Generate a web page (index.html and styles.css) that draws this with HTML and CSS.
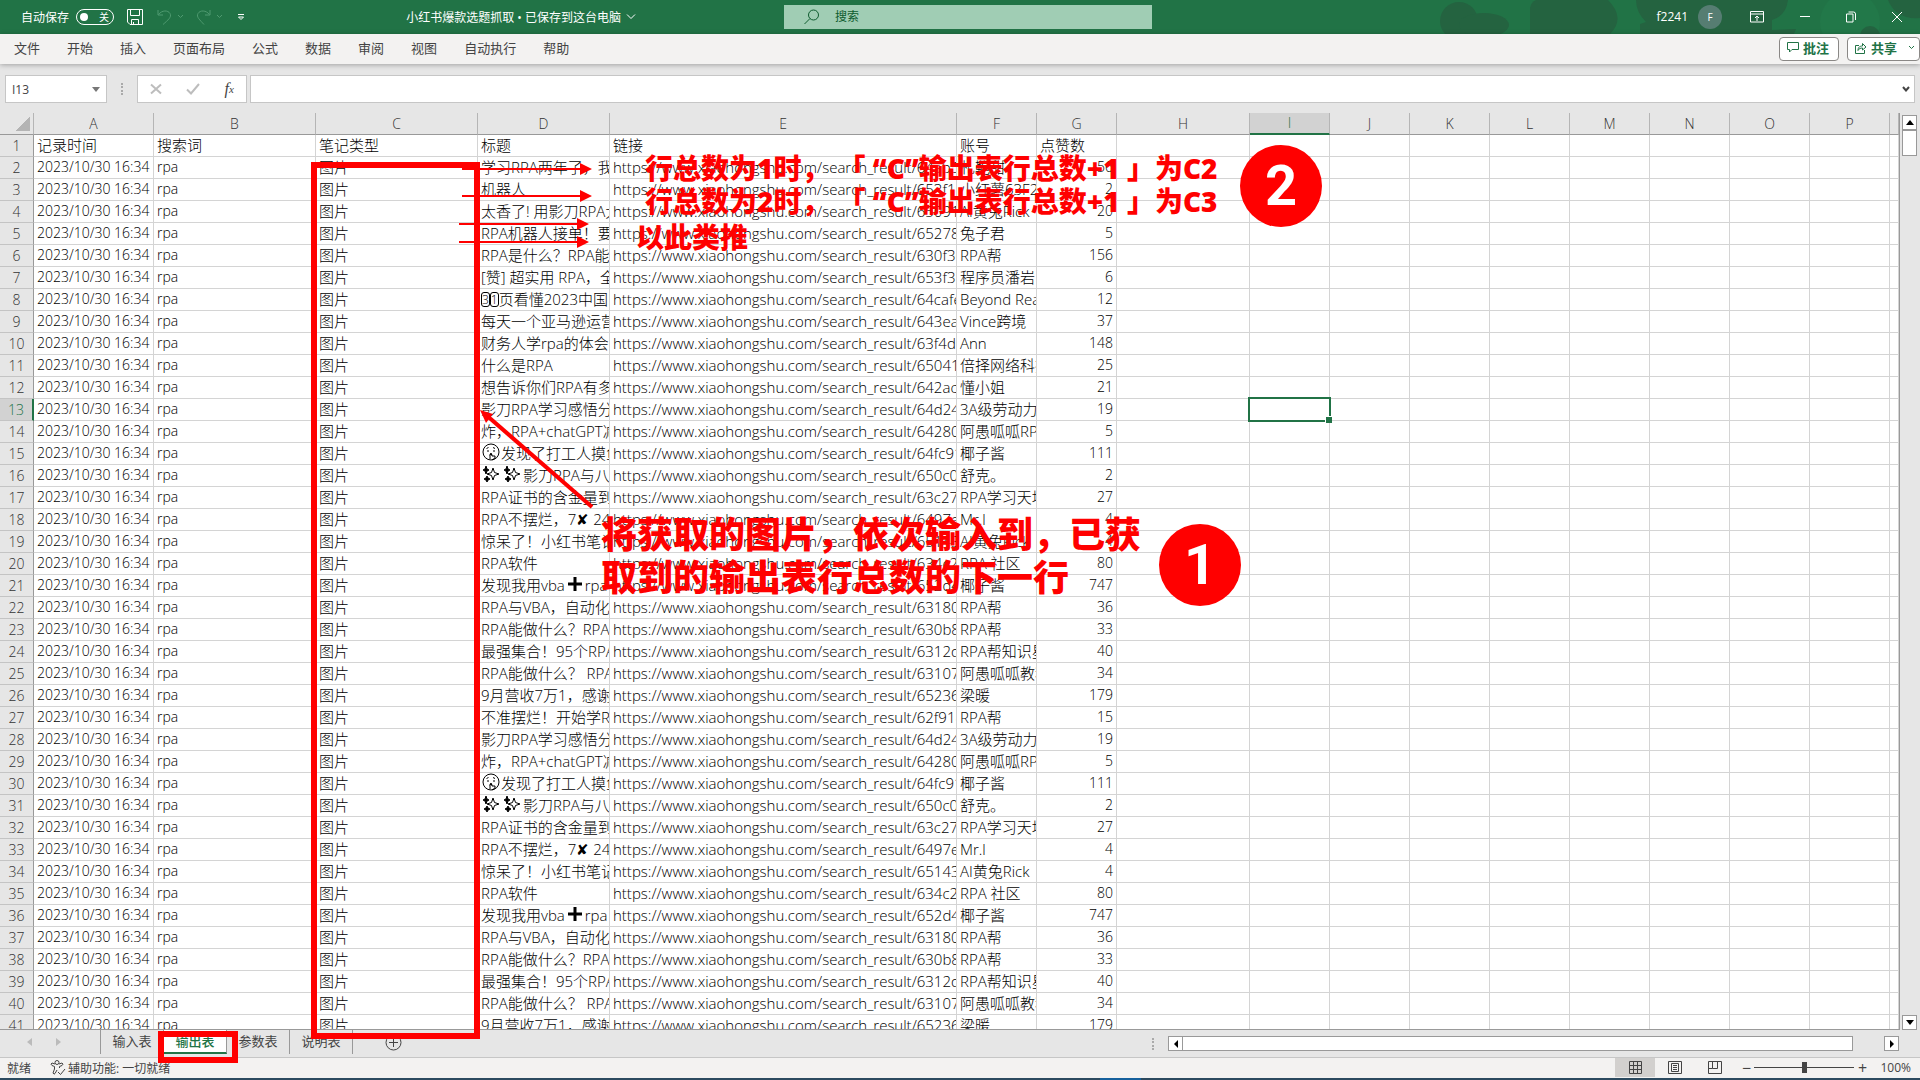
FILE: index.html
```html
<!DOCTYPE html>
<html lang="zh-CN">
<head>
    <meta charset="UTF-8">
    <meta name="viewport" content="width=device-width, initial-scale=1.0">
    <title>小红书爆款选题抓取</title>
    <link rel="stylesheet" href="styles.css">
</head>
<body>

    <header class="titlebar">
        <svg class="titlebar-art" width="520" height="34" viewBox="0 0 520 34">
            <circle cx="59" cy="21" r="19"/>
            <ellipse cx="84" cy="25" rx="25" ry="12"/>
            <path d="M136 0H208Q226 18 210 34H130V8Q131 2 136 0z"/>
            <path d="M236 0H388Q386 16 372 20V30L396 29L394 34H240V24L246 22Q236 12 236 0Z"/>
            <circle class="light" cx="450" cy="22" r="30"/>
            <circle cx="470" cy="36" r="10"/>
            <path d="M488 0h32v18q-24 2-32-18z"/>
        </svg>
        <div class="quick-access">
            <label class="autosave">自动保存
                <input type="checkbox">
                <span class="toggle"><i></i>关</span>
            </label>
            <button class="icon-btn save" aria-label="保存">
                <svg width="16" height="16" viewBox="0 0 16 16"><path d="M.5.5h15v15H3L.5 13zM3.5.5v6h9v-6M4.500 15.500v-5h7v5M6.500 15v-2"/></svg>
            </button>
            <button class="icon-btn dim" aria-label="撤消">
                <svg width="28" height="16" viewBox="0 0 28 16"><path d="M1 1v5h5M1.500 5.500C5 1 11 1 13 4.500C15 8 11 11 6 15.500M21 6l2.500 2.500L26 6"/></svg>
            </button>
            <button class="icon-btn dim" aria-label="恢复">
                <svg width="28" height="16" viewBox="0 0 28 16"><path d="M14 1v5H9M13.500 5.500C10 1 4 1 2 4.500C0 8 4 11 8 15.500M21 6l2.500 2.500L26 6"/></svg>
            </button>
            <button class="icon-btn more" aria-label="自定义">
                <svg width="8" height="8" viewBox="0 0 8 8"><path d="M1 1.500h6M1.500 4L4 6.500L6.500 4z"/></svg>
            </button>
            <div class="doc-title">小红书爆款选题抓取 • 已保存到这台电脑
                <svg width="10" height="6" viewBox="0 0 10 6"><path d="M1 .5l4 4l4-4"/></svg>
            </div>
        </div>
        <div class="search">
            <svg width="16" height="16" viewBox="0 0 16 16"><circle cx="9.500" cy="6" r="5"/><path d="M6 9.500L.5 15"/></svg>
            <input type="text" placeholder="搜索" aria-label="搜索">
        </div>
        <div class="window-tools">
            <span class="user">f2241</span>
            <span class="avatar">F</span>
            <button class="icon-btn" aria-label="功能区显示选项">
                <svg width="14" height="12" viewBox="0 0 14 12"><path d="M.5.5h13v10.500H.5zM.5 3h13M7 10V5M5 7l2-2l2 2"/></svg>
            </button>
            <button class="icon-btn" aria-label="最小化">
                <svg width="10" height="12" viewBox="0 0 10 12"><path d="M0 5.500h10"/></svg>
            </button>
            <button class="icon-btn" aria-label="还原">
                <svg width="10" height="12" viewBox="0 0 10 12"><path d="M.5 3h6.500v8H.5zM2.500 1h5q2 0 2 2v6"/></svg>
            </button>
            <button class="icon-btn" aria-label="关闭">
                <svg width="10" height="12" viewBox="0 0 10 12"><path d="M0 1l10 10M10 1L0 11"/></svg>
            </button>
        </div>
    </header>

    <nav class="ribbon">
        <button>文件</button>
        <button>开始</button>
        <button>插入</button>
        <button>页面布局</button>
        <button>公式</button>
        <button>数据</button>
        <button>审阅</button>
        <button>视图</button>
        <button>自动执行</button>
        <button>帮助</button>
        <div class="ribbon-right">
            <button class="pill">
                <svg width="12" height="11" viewBox="0 0 12 11"><path d="M.5.5h11v7H5L2.500 10V7.500h-2z"/></svg>批注
            </button>
            <button class="pill share">
                <svg width="12" height="12" viewBox="0 0 12 12"><path d="M4 3.500H.5v8h9V8M3 8.500C3 5 5 4 7.500 4V1.500L11 5L7.500 8V6C5.500 6 4 6.500 3 8.500z"/></svg>共享
                <svg class="caret" width="7" height="5" viewBox="0 0 7 5"><path d="M1 1l2.500 2.500L6 1"/></svg>
            </button>
        </div>
    </nav>

    <div class="formula-bar">
        <div class="name-box">
            <input type="text" value="I13" aria-label="名称框">
            <svg width="8" height="5" viewBox="0 0 8 5"><path d="M0 0h8L4 5z"/></svg>
        </div>
        <span class="dots"></span>
        <div class="fx-box">
            <button aria-label="取消"><svg width="12" height="12" viewBox="0 0 12 12"><path class="grey" d="M1 1.500l10 9M11 1.500l-10 9"/></svg></button>
            <button aria-label="输入"><svg width="14" height="12" viewBox="0 0 14 12"><path class="grey" d="M1 6.500l4 4L13 1"/></svg></button>
            <button class="fx" aria-label="插入函数">f<sub>x</sub></button>
        </div>
        <div class="formula-input">
            <input type="text" aria-label="编辑栏">
            <svg width="8" height="6" viewBox="0 0 8 6"><path d="M1 1l3 3.500L7 1"/></svg>
        </div>
    </div>

    <main class="workspace">
        <div class="sheet">
            <table class="grid">
                <colgroup>
                    <col class="col-num"><col class="col-a"><col class="col-b"><col class="col-b">
                    <col class="col-d"><col class="col-e"><col class="col-s"><col class="col-s"><col class="col-h">
                    <col class="col-s"><col class="col-s"><col class="col-s"><col class="col-s">
                    <col class="col-s"><col class="col-s"><col class="col-s"><col class="col-s"><col>
                </colgroup>
                <thead><tr id="letters"></tr></thead>
                <tbody id="rows"></tbody>
            </table>
        </div>
        <div class="vscroll">
            <button aria-label="向上"><svg width="8" height="5" viewBox="0 0 8 5"><path d="M0 5h8L4 0z"/></svg></button>
            <div class="vthumb"></div>
            <button class="down" aria-label="向下"><svg width="8" height="5" viewBox="0 0 8 5"><path d="M0 0h8L4 5z"/></svg></button>
        </div>
    </main>

    <div class="sheet-bar">
        <div class="tab-arrows">
            <svg width="5" height="8" viewBox="0 0 5 8"><path d="M5 0v8L0 4z"/></svg>
            <svg width="5" height="8" viewBox="0 0 5 8"><path d="M0 0v8l5-4z"/></svg>
        </div>
        <button class="tab">输入表</button>
        <button class="tab active">输出表</button>
        <button class="tab">参数表</button>
        <button class="tab">说明表</button>
        <button class="add-tab" aria-label="新工作表">
            <svg width="17" height="17" viewBox="0 0 17 17"><circle cx="8.500" cy="8.500" r="7.500"/><path d="M8.500 4v9M4 8.500h9"/></svg>
        </button>
        <div class="hscroll">
            <span class="dots"></span>
            <button aria-label="向左"><svg width="4" height="8" viewBox="0 0 4 8"><path d="M4 0v8L0 4z"/></svg></button>
            <div class="hthumb"></div>
            <button class="right" aria-label="向右"><svg width="4" height="8" viewBox="0 0 4 8"><path d="M0 0v8l4-4z"/></svg></button>
        </div>
    </div>

    <footer class="status">
        <span>就绪</span>
        <svg class="access" width="16" height="15" viewBox="0 0 16 15"><circle cx="7" cy="2.500" r="2"/><path d="M5 4L2 3Q0 4 2 5.500L4.500 6.500V9L3 13Q4 15 5 13.500L7 10M9 4l3-1q2 1 0 2.500L9.500 6.500V8M8 12l2.500 2.500L15 9"/></svg>
        <span>辅助功能: 一切就绪</span>
        <div class="status-right">
            <button class="view on" aria-label="普通"><svg width="13" height="13" viewBox="0 0 13 13"><path d="M.5.5h12v12H.5zM4.500.5v12M8.500.5v12M.5 4.500h12M.5 8.500h12"/></svg></button>
            <button class="view" aria-label="页面布局"><svg width="14" height="13" viewBox="0 0 14 13"><path d="M.5.5h13v12H.5zM3.500 2.500h7v8h-7zM5 4.500h4M5 6.500h4M5 8.500h4"/></svg></button>
            <button class="view" aria-label="分页预览"><svg width="14" height="13" viewBox="0 0 14 13"><path d="M.5.5h13v12H.5zM4.500.5v7h5v-7M.5 7.500h4"/></svg></button>
            <button class="zoom-btn minus" aria-label="缩小">−</button>
            <input class="zoom" type="range" min="0" max="100" value="50" aria-label="缩放">
            <button class="zoom-btn" aria-label="放大">+</button>
            <span class="percent">100%</span>
        </div>
    </footer>
    <div class="taskbar"><i></i></div>

    <!-- red notes drawn over the sheet -->
    <div class="frame frame-column"></div>
    <div class="frame frame-tab"></div>
    <svg class="arrows" width="150" height="360" viewBox="0 0 150 360">
        <path class="thin" d="M7 14h122M7 41h122M4 69h122M4 87h122"/>
        <path class="head" d="M125 8l12 6l-12 6zM125 35l12 6l-12 6zM122 63l12 6l-12 6zM122 81l12 6l-12 6z"/>
        <path class="thick" d="M30 259L137 352"/>
        <path class="head" d="M25 255l13 4l-7 9z"/>
    </svg>
    <div class="note note-top">
        <p><span>行总数为1时，</span><span>「 “C”输出表行总数+1 」为C2</span></p>
        <p><span>行总数为2时，</span><span>「 “C”输出表行总数+1 」为C3</span></p>
    </div>
    <p class="note note-rest">以此类推</p>
    <p class="note note-main">将获取的图片，依次输入到，已获取到的输出表行总数的下一行</p>
    <div class="badge badge-two">2</div>
    <div class="badge badge-one">1</div>

    <script>
        const face = '<svg class="emoji" width="20" height="18" viewBox="0 0 20 18"><circle cx="10" cy="9" r="8"/><path d="M5.500 5.500l2-1M12 4.500l2 1M7 7v2M13 7v2M8.500 12q1.500-2 3 0M9 16v-4l1-2l1 3h3v2l-3 2"/></svg>';
        const star = '<svg class="emoji" width="21" height="18" viewBox="0 0 21 18"><path d="M12 3l1.500 4.500L18 9l-4.500 1.500L12 15l-1.500-4.500L6 9l4.500-1.500z"/><path class="solid" d="M5 1l1 3l2 1l-2 1l-1 3l-1-3l-2-1l2-1zM6 11l1 2l2 1l-2 1l-1 2l-1-2l-2-1l2-1z"/></svg>';
        const plus = '<svg class="emoji" width="20" height="18" viewBox="0 0 20 18"><path class="bold" d="M10 2v14M3 9h14"/></svg>';
        const key = '<span class="key">3</span><span class="key">1</span>';
        const base = "https://www.xiaohongshu.com/search_result/";

        // title, note id, account, likes
        const notes = [
            ["学习RPA两年了，我", "64ab5c", "札鞄甜", 56],
            ["机器人", "653f1c", "小红薯63F2", 2],
            ["太香了! 用影刀RPA太", "65091", "AI黄兔Rick", 20],
            ["RPA机器人接单！要", "65278", "兔子君", 5],
            ["RPA是什么？RPA能", "630f36", "RPA帮", 156],
            ["[赞] 超实用 RPA，全", "653f37", "程序员潘岩", 6],
            [key + "页看懂2023中国R", "64cafe", "Beyond Real", 12],
            ["每天一个亚马逊运营", "643ea", "Vince跨境", 37],
            ["财务人学rpa的体会", "63f4d", "Ann", 148],
            ["什么是RPA", "65041", "倍择网络科技", 25],
            ["想告诉你们RPA有多", "642ac", "懂小姐", 21],
            ["影刀RPA学习感悟分", "64d24", "3A级劳动力", 19],
            ["炸，RPA+chatGPT减", "64280", "阿愚呱呱RPA", 5],
            [face + "发现了打工人摸鱼", "64fc91", "椰子酱", 111],
            [star + star + "影刀RPA与八", "650c0", "舒克。", 2],
            ["RPA证书的含金量到", "63c27", "RPA学习天地", 27],
            ["RPA不摆烂，7✘ 24", "6497e", "Mr.l", 4],
            ["惊呆了！小红书笔记", "65143", "AI黄兔Rick", 4],
            ["RPA软件", "634c2", "RPA 社区", 80],
            ["发现我用vba" + plus + "rpa", "652d4", "椰子酱", 747],
            ["RPA与VBA，自动化", "63180", "RPA帮", 36],
            ["RPA能做什么？RPA", "630b8", "RPA帮", 33],
            ["最强集合！95个RPA", "6312d", "RPA帮知识星球", 40],
            ["RPA能做什么？ RPA", "63107", "阿愚呱呱教程", 34],
            ["9月营收7万1，感谢大", "65236", "梁暖", 179],
            ["不准摆烂！开始学R", "62f918", "RPA帮", 15]
        ];
        const all = notes.concat(notes.slice(11, 25));

        const blanks = row => "HIJKLMNOPQ".split("").map(c => `<td${c + row === "I13" ? ' class="selected"' : ""}></td>`).join("");

        document.getElementById("letters").innerHTML = '<th class="corner"></th>' +
            "ABCDEFGHIJKLMNOP".split("").map(c => `<th${c === "I" ? ' class="current"' : ""}>${c}</th>`).join("") + "<th></th>";

        let html = `<tr><th>1</th><td>记录时间</td><td>搜索词</td><td>笔记类型</td><td>标题</td><td>链接</td><td>账号</td><td>点赞数</td>${blanks(1)}</tr>`;
        all.forEach((n, i) => {
            const row = i + 2;
            html += `<tr><th${row === 13 ? ' class="current"' : ""}>${row}</th><td class="latin">2023/10/30 16:34</td><td class="latin">rpa</td><td>图片</td>` +
                `<td>${n[0]}</td><td>${base}${n[1]}</td><td>${n[2]}</td><td class="latin num">${n[3]}</td>${blanks(row)}</tr>`;
        });
        document.getElementById("rows").innerHTML = html;
    </script>
</body>
</html>
```
FILE: styles.css
```css
* {
    box-sizing: border-box;
}

body {
    margin: 0;
    height: 100vh;
    display: flex;
    flex-direction: column;
    overflow: hidden;
    position: relative;
    background: #e6e6e6;
    color: #444;
    font-family: "Open Sans", "Noto Sans CJK SC", sans-serif;
    font-size: 12px;
}

button, input {
    font: inherit;
    color: inherit;
    border: none;
    background: none;
    padding: 0;
    margin: 0;
    outline: none;
}

button {
    display: flex;
    align-items: center;
    justify-content: center;
}

p {
    margin: 0;
}

svg {
    fill: none;
    stroke: currentColor;
    flex: none;
}

/* title bar */
.titlebar {
    position: relative;
    flex: none;
    height: 34px;
    padding-bottom: 1px;
    display: flex;
    align-items: center;
    background: #217346;
    color: white;
}

.titlebar-art {
    position: absolute;
    right: 0;
    top: 0;
    fill: #246340;
    stroke: none;
}

.titlebar-art .light {
    fill: #227849;
}

.quick-access, .window-tools {
    flex: 1;
    display: flex;
    align-items: center;
    position: relative;
}

.quick-access {
    padding-left: 16px;
}

.autosave {
    display: flex;
    align-items: center;
    gap: 7px;
    margin-left: 5px;
}

.autosave input {
    position: absolute;
    opacity: 0;
}

.toggle {
    width: 38px;
    height: 16px;
    border: 1px solid white;
    border-radius: 8px;
    display: flex;
    align-items: center;
    justify-content: space-between;
    padding: 0 4px 0 3px;
    font-size: 10px;
}

.toggle i {
    width: 8px;
    height: 8px;
    border-radius: 50%;
    background: white;
}

.save {
    margin: 0 14px 0 13px;
}

.dim {
    color: #4f9a70;
    margin-right: 11px;
}

.more {
    margin-left: 2px;
}

.doc-title {
    margin-left: auto;
    margin-right: 130px;
    display: flex;
    align-items: center;
    gap: 5px;
}

.search {
    width: 368px;
    height: 24px;
    margin-left: 18px;
    background: #a0cdb4;
    color: #0e5c2f;
    display: flex;
    align-items: center;
    gap: 15px;
    padding-left: 20px;
}

.search input {
    flex: 1;
}

.search input::placeholder {
    color: #0e5c2f;
    opacity: 1;
}

.window-tools {
    justify-content: flex-end;
    padding-right: 18px;
}

.window-tools .icon-btn {
    margin-left: 36px;
}

.window-tools .avatar + .icon-btn {
    margin-left: 28px;
}

.avatar {
    width: 24px;
    height: 24px;
    border-radius: 50%;
    background: #567d72;
    margin-left: 10px;
    display: flex;
    align-items: center;
    justify-content: center;
    font-size: 10px;
}

/* ribbon */
.ribbon {
    position: relative;
    flex: none;
    height: 30px;
    padding: 0 0 3px 14px;
    display: flex;
    align-items: center;
    gap: 27px;
    background: #f3f2f1;
    font-size: 13px;
    box-shadow: 0 1px 5px rgba(0, 0, 0, 0.3);
}

.ribbon-right {
    margin: 3px 0 0 auto;
    display: flex;
    gap: 8px;
}

.pill {
    height: 24px;
    padding: 0 9px 3px 7px;
    gap: 4px;
    border: 1px solid #8a8886;
    border-radius: 4px;
    background: white;
    color: #217346;
    font-weight: bold;
}

.share {
    padding-right: 4px;
}

.caret {
    margin-left: 7px;
}

/* formula bar */
.formula-bar {
    flex: none;
    display: flex;
    align-items: center;
    height: 49px;
    padding: 11px 5px 10px;
}

.name-box, .fx-box, .formula-input {
    height: 28px;
    border: 1px solid #c6c6c6;
    background: white;
    display: flex;
    align-items: center;
}

.name-box {
    width: 102px;
    padding: 0 6px;
}

.name-box input {
    flex: 1;
    min-width: 0;
}

.name-box svg {
    fill: #777;
    stroke: none;
}

.dots {
    width: 3px;
    height: 12px;
    border-left: 2px dotted #aaa;
    margin: 0 13px 0 14px;
}

.fx-box {
    width: 110px;
    justify-content: space-around;
    margin-right: 3px;
}

.grey {
    stroke: #bdbdbd;
    stroke-width: 2;
}

.fx {
    font-family: "Liberation Serif", serif;
    font-style: italic;
    font-size: 16px;
}

.fx sub {
    font-size: 11px;
}

.formula-input {
    flex: 1;
    padding-right: 4px;
}

.formula-input input {
    flex: 1;
}

.formula-input svg {
    stroke-width: 2;
}

/* sheet */
.workspace {
    flex: 1;
    min-height: 0;
    display: flex;
}

.sheet {
    flex: 1;
    min-width: 0;
    overflow: hidden;
    border-right: 1px solid #999;
    border-bottom: 1px solid #999;
    background: white;
}

.grid {
    width: 100%;
    table-layout: fixed;
    border-collapse: separate;
    border-spacing: 0;
    font-size: 15px;
    font-weight: 300;
    line-height: 20px;
    color: black;
}

.col-num { width: 34px; }
.col-a { width: 120px; }
.col-b { width: 162px; }
.col-d { width: 132px; }
.col-e { width: 347px; }
.col-s { width: 80px; }
.col-h { width: 133px; }

.grid th, .grid td {
    height: 22px;
    padding: 0 3px 1px;
    border-right: 1px solid #d4d4d4;
    border-bottom: 1px solid #d4d4d4;
    white-space: nowrap;
    overflow: hidden;
    text-align: left;
    font-weight: 300;
}

.grid th {
    background: #e6e6e6;
    color: #333;
    text-align: center;
    padding: 0;
    font-size: 14px;
    border-right-color: #999;
    border-bottom-color: #c4c4c4;
}

.grid thead th {
    border-right-color: #b5b5b5;
    border-bottom-color: #999;
}

.grid .corner {
    background: linear-gradient(135deg, #e6e6e6 50%, #b4b4b4 50%) 16px 4px / 14px 14px no-repeat #e6e6e6;
}

.grid .current {
    background: #d2d2d2;
    color: #217346;
}

.grid thead .current {
    border-bottom: 2px solid #217346;
}

.grid tbody .current {
    border-right: 2px solid #217346;
}

.grid .latin {
    font-size: 14px;
}

.grid .num {
    text-align: right;
}

.grid .selected {
    position: relative;
    overflow: visible;
}

.selected::before {
    content: "";
    position: absolute;
    inset: -2px;
    border: 2px solid #217346;
}

.selected::after {
    content: "";
    position: absolute;
    right: -3px;
    bottom: -3px;
    width: 6px;
    height: 6px;
    background: #217346;
    border-left: 1px solid white;
    border-top: 1px solid white;
}

.emoji {
    vertical-align: top;
}

.solid {
    fill: black;
}

.bold {
    stroke-width: 3;
}

.key {
    display: inline-block;
    height: 15px;
    line-height: 13px;
    border: 1px solid black;
    border-radius: 3px;
    font-size: 12px;
    vertical-align: top;
    margin-top: 3px;
}

.vscroll {
    width: 20px;
    padding: 2px 3px 0 2px;
    display: flex;
    flex-direction: column;
}

.vscroll button, .hscroll button {
    flex: none;
    width: 15px;
    height: 15px;
    background: white;
    border: 1px solid #999;
}

.vscroll button svg, .hscroll button svg {
    fill: black;
    stroke: none;
}

.vthumb {
    height: 26px;
    background: white;
    border: 1px solid #999;
}

.vscroll .down {
    margin-top: auto;
}

/* sheet tabs */
.sheet-bar {
    flex: none;
    height: 27px;
    display: flex;
    align-items: flex-start;
    font-size: 13px;
}

.tab-arrows {
    width: 101px;
    height: 24px;
    padding-left: 27px;
    display: flex;
    align-items: center;
    gap: 24px;
    border-right: 1px solid #999;
}

.tab-arrows svg {
    fill: #bbb;
    stroke: none;
}

.tab {
    width: 63px;
    height: 24px;
    padding-bottom: 4px;
    border-right: 1px solid #999;
}

.tab.active {
    background: white;
    color: #217346;
    font-weight: 500;
    padding-bottom: 2px;
    border-bottom: 2px solid #217346;
}

.add-tab {
    margin: 4px 0 0 32px;
}

.hscroll {
    margin-left: auto;
    margin-right: 21px;
    width: 750px;
    padding-top: 6px;
    display: flex;
    align-items: center;
}

.hscroll .dots {
    margin-left: 3px;
}

.hthumb {
    flex: 1;
    height: 15px;
    background: white;
    border: 1px solid #999;
    margin-left: -1px;
}

.hscroll .right {
    margin-left: 31px;
}

/* status bar */
.status {
    flex: none;
    height: 21px;
    border-top: 1px solid #c6c6c6;
    background: #f3f2f1;
    display: flex;
    align-items: center;
    padding: 0 9px 1px 7px;
}

.access {
    margin: 0 2px 0 19px;
}

.status-right {
    margin-left: auto;
    align-self: stretch;
    display: flex;
    align-items: center;
}

.view {
    width: 40px;
    align-self: stretch;
}

.view.on {
    background: #d2d0ce;
}

.zoom-btn {
    width: 12px;
    font-size: 16px;
    line-height: 20px;
}

.minus {
    margin-left: 5px;
}

.zoom {
    appearance: none;
    width: 100px;
    height: 11px;
    margin: 0 2px;
    background: linear-gradient(#444, #444) center / 100% 1px no-repeat;
}

.zoom::-webkit-slider-thumb {
    appearance: none;
    width: 5px;
    height: 11px;
    background: #444;
}

.percent {
    margin-left: 12px;
}

.taskbar {
    flex: none;
    height: 2px;
    background: #2c4a5f;
}

.taskbar i {
    display: block;
    width: 41px;
    height: 2px;
    margin-left: 1100px;
    background: #15609c;
}

/* notes over the sheet */
.frame {
    position: absolute;
    border: 6px solid red;
}

.frame-column {
    left: 311px;
    top: 162px;
    width: 169px;
    height: 877px;
}

.frame-tab {
    left: 158px;
    top: 1031px;
    width: 80px;
    height: 32px;
}

.arrows {
    position: absolute;
    left: 455px;
    top: 155px;
    stroke: red;
}

.thin {
    stroke-width: 2;
}

.thick {
    stroke-width: 4;
}

.head {
    fill: red;
    stroke: none;
}

.note {
    position: absolute;
    color: red;
    font-family: "Open Sans", "Noto Sans CJK SC", sans-serif;
    font-weight: 900;
    font-size: 28px;
    line-height: 33px;
}

.note-top {
    left: 645px;
    top: 152px;
}

.note-top p {
    display: flex;
    gap: 8px;
}

.note-rest {
    left: 636px;
    top: 221px;
}

.note-main {
    left: 601px;
    top: 513px;
    width: 544px;
    font-size: 36px;
    line-height: 43px;
}

.badge {
    position: absolute;
    width: 82px;
    height: 82px;
    border-radius: 50%;
    background: red;
    color: white;
    display: flex;
    align-items: center;
    justify-content: center;
    font-family: Roboto, sans-serif;
    font-weight: bold;
    font-size: 56px;
}

.badge-two {
    left: 1240px;
    top: 145px;
}

.badge-one {
    left: 1159px;
    top: 524px;
}
```
